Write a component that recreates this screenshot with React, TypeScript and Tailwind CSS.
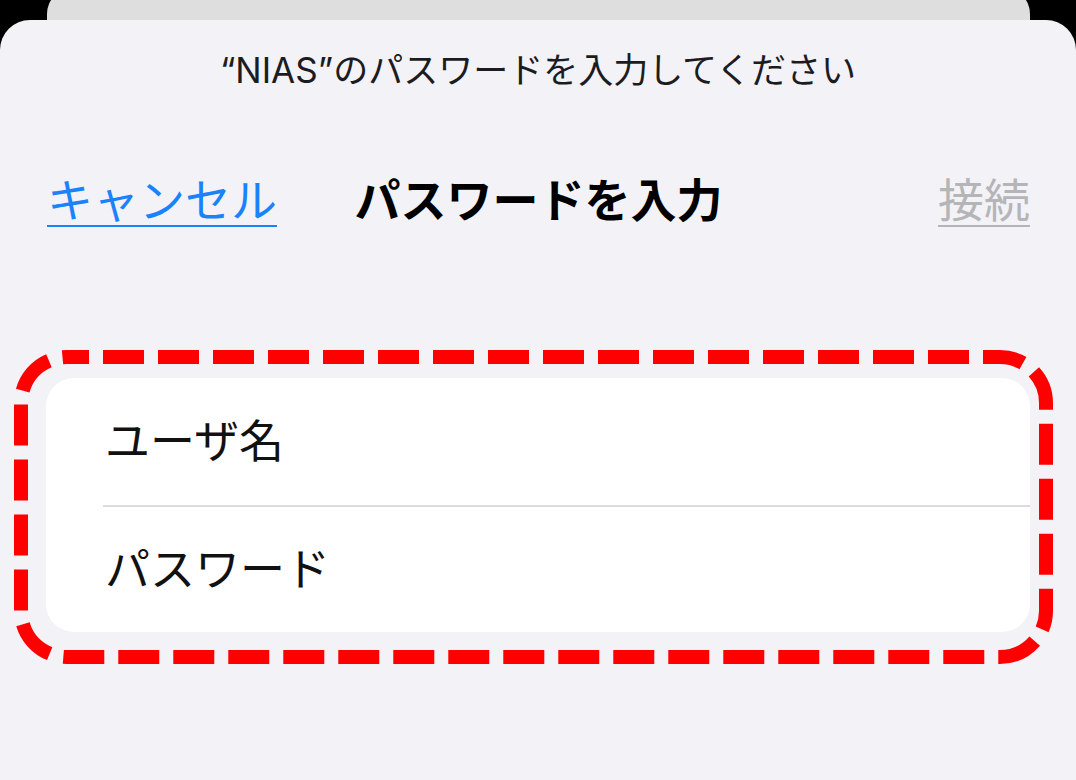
const FONT = "font-['Inter','Noto_Sans_CJK_JP',sans-serif]";

function DashedFrame() {
  // red annotation drawn over the form card
  return (
    <svg className="pointer-events-none absolute inset-0" width="1040" height="315" viewBox="0 0 1040 315">
      <rect
        x="7"
        y="7"
        width="1025"
        height="300"
        rx="46"
        ry="46"
        fill="none"
        stroke="#ff0000"
        strokeWidth="14"
        strokeDasharray="41 14"
        strokeDashoffset="19"
      />
    </svg>
  );
}

export default function App() {
  return (
    <div className={`h-[780px] w-full overflow-hidden bg-black ${FONT}`}>
      {/* sheet behind */}
      <div className="-mt-[12px] ml-[47px] mr-[46px] h-[32px] rounded-t-[26px] bg-[#dedede]" />

      {/* front sheet */}
      <div className="h-[760px] rounded-t-[30px] bg-[#f2f2f7]">
        <p className="pt-[30px] text-center text-[35px] leading-[40px] text-[#1c1c1e]">
          “NIAS”のパスワードを入力してください
        </p>

        <div className="mt-[80px] grid h-[60px] grid-cols-[1fr_auto_1fr] items-center pl-[47px] pr-[46px]">
          <button className="justify-self-start text-[46px] leading-[60px] text-[#1a82fb] underline decoration-2 underline-offset-[8px]">
            キャンセル
          </button>
          <h1 className="text-[46px] font-bold leading-[60px] text-black">パスワードを入力</h1>
          <button className="justify-self-end text-[46px] leading-[60px] text-[#b5b5b8] underline decoration-2 underline-offset-[8px]">
            接続
          </button>
        </div>

        <div className="relative ml-[14px] mt-[120px] h-[315px] w-[1040px] pl-[32px] pt-[28px]">
          <div className="w-[984px] overflow-hidden rounded-[28px] bg-white">
            <div className="flex h-[127px] items-center pl-[59px] text-[45px] text-[#111111]">ユーザ名</div>
            <div className="ml-[57px] h-[2px] bg-[#dcdcdf]" />
            <div className="flex h-[125px] items-center pl-[59px] text-[45px] text-[#111111]">パスワード</div>
          </div>
          <DashedFrame />
        </div>
      </div>
    </div>
  );
}
